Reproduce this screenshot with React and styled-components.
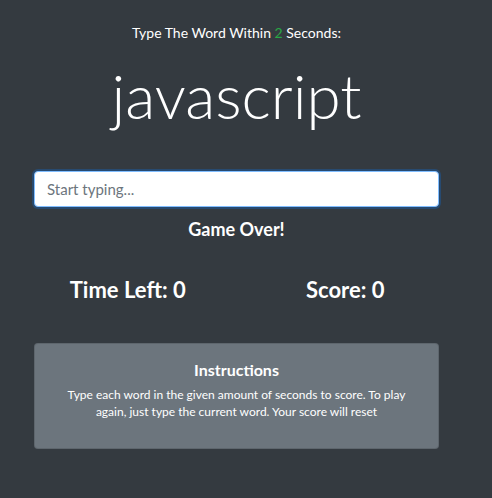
import React, { useState } from 'react';
import styled, { createGlobalStyle } from 'styled-components';

const GlobalStyle = createGlobalStyle`
  html, body {
    margin: 0;
    padding: 0;
    background: #343a40;
  }
  body {
    font-family: Lato, "Open Sans", sans-serif;
    color: #fff;
    min-height: 498px;
  }
`;

const Page = styled.div`
  width: 405px;
  margin-left: 34px;
  padding-top: 21px;
  display: flex;
  flex-direction: column;
  align-items: stretch;
`;

const Prompt = styled.p`
  margin: 0;
  text-align: center;
  font-size: 14px;
  line-height: 24px;
`;

const Seconds = styled.span`
  color: #28a745;
`;

const Word = styled.h2`
  margin: 6px 0 0;
  text-align: center;
  font-size: 62px;
  font-weight: 300;
  line-height: 88px;
`;

const WordInput = styled.input`
  box-sizing: border-box;
  margin-top: 32px;
  width: 100%;
  height: 36px;
  padding: 6px 12px;
  font-family: inherit;
  font-size: 15px;
  color: #495057;
  background: #fff;
  border: 1px solid #80bdff;
  border-radius: 4px;
  outline: none;
  box-shadow: 0 0 0 2px rgba(0, 123, 255, 0.25);

  &::placeholder {
    color: #6c757d;
  }
`;

const Status = styled.h5`
  margin: 10px 0 0;
  text-align: center;
  font-size: 18px;
  font-weight: 700;
  line-height: 24px;
`;

const StatsRow = styled.div`
  display: grid;
  grid-template-columns: 1fr 1fr;
  margin: 34px -15px 0;
`;

const Stat = styled.h3`
  margin: 0;
  text-align: center;
  font-size: 22px;
  font-weight: 700;
  line-height: 30px;
`;

const Card = styled.div`
  margin-top: 38px;
  background: #6c757d;
  border: 1px solid rgba(0, 0, 0, 0.125);
  border-radius: 4px;
  padding: 16px 20px 28px;
  text-align: center;
`;

const CardTitle = styled.h5`
  margin: 0 0 6px;
  font-size: 16px;
  font-weight: 700;
  line-height: 20px;
`;

const CardText = styled.p`
  margin: 0;
  font-size: 12px;
  line-height: 17px;
`;

export default function App() {
  const [text, setText] = useState('');
  const seconds = 2;

  return (
    <>
      <GlobalStyle />
      <Page>
        <Prompt>
          Type The Word Within <Seconds>{seconds}</Seconds> Seconds:
        </Prompt>
        <Word>javascript</Word>
        <WordInput
          autoFocus
          placeholder="Start typing..."
          value={text}
          onChange={e => setText(e.target.value)}
        />
        <Status>Game Over!</Status>
        <StatsRow>
          <Stat>Time Left: 0</Stat>
          <Stat>Score: 0</Stat>
        </StatsRow>
        <Card>
          <CardTitle>Instructions</CardTitle>
          <CardText>
            Type each word in the given amount of seconds to score. To play again, just type the current word. Your score will reset
          </CardText>
        </Card>
      </Page>
    </>
  );
}
